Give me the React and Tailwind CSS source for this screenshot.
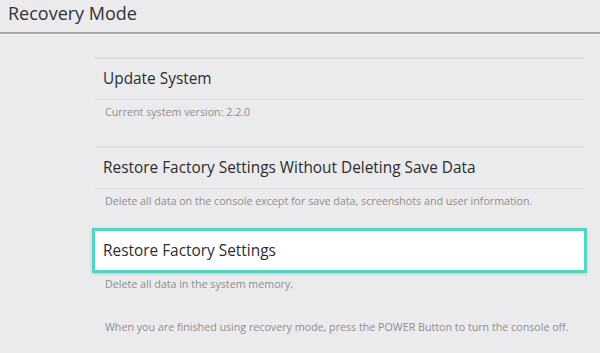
export default function App() {
  const font = { fontFamily: '"Open Sans", "Noto Sans", sans-serif' }
  return (
    <div className="w-[600px] h-[353px] overflow-hidden bg-[#ebebed] text-[#2d2d2d]" style={font}>
      {/* Header */}
      <div className="h-[32px] pl-[8px] pt-[1px] text-[18px] leading-[24px] text-[#333]">Recovery Mode</div>
      <div className="h-[2px] bg-[#a6a6a6]" />
      <div className="h-[1px] bg-[#f7f7f7]" />

      <div className="ml-[95px] w-[489px] mt-[22px]">
        {/* Update System */}
        <div className="border-t-2 border-[#dfdfe1]">
          <div className="h-[40px] flex items-center pl-[8px] text-[15.4px]">Update System</div>
          <div className="h-[1px] bg-[#d9d9db]" />
          <div className="h-[46px] pl-[10px] pt-[5px] text-[10.7px] leading-[14px] text-[#8e8e8e]">
            Current system version: 2.2.0
          </div>
        </div>

        {/* Restore Without Deleting */}
        <div className="border-t-2 border-[#dfdfe1]">
          <div className="h-[40px] flex items-center pl-[8px] text-[15.4px]">
            Restore Factory Settings Without Deleting Save Data
          </div>
          <div className="h-[1px] bg-[#d9d9db]" />
          <div className="h-[39px] pl-[10px] pt-[5px] text-[10.7px] leading-[14px] text-[#8e8e8e]">
            Delete all data on the console except for save data, screenshots and user information.
          </div>
        </div>

        {/* Restore Factory Settings (selected) */}
        <div className="-ml-[3px] w-[495px] h-[45px] border-[3px] border-[#4fd6c5] bg-white flex items-center pl-[8px] text-[15.4px] shadow-[0_1px_3px_rgba(0,0,0,0.15)]">
          Restore Factory Settings
        </div>
        <div className="pl-[10px] pt-[4px] text-[10.7px] leading-[14px] text-[#8e8e8e]">
          Delete all data in the system memory.
        </div>

        <div className="mt-[29px] pl-[10px] text-[10.7px] leading-[14px] text-[#8e8e8e]">
          When you are finished using recovery mode, press the POWER Button to turn the console off.
        </div>
      </div>
    </div>
  )
}
